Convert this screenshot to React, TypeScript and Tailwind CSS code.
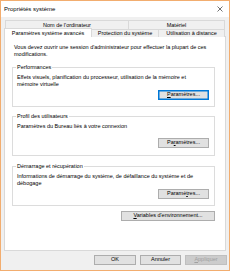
import React from 'react'

function Btn({ children, focused = false, disabled = false, className = '' }: { children: React.ReactNode; focused?: boolean; disabled?: boolean; className?: string }) {
  return (
    <button
      type="button"
      className={`flex h-[10px] items-center justify-center border text-[5.5px] leading-none ${
        focused ? 'border-[#0078d7] bg-[#e1e1e1] shadow-[inset_0_0_0_0.5px_#0078d7]' : disabled ? 'border-[#bfbfbf] bg-[#cccccc] text-[#a0a0a0]' : 'border-[#adadad] bg-[#e1e1e1]'
      } ${className}`}
    >
      {children}
    </button>
  )
}

function Group({ title, lines, button, className = '' }: { title: string; lines: string[]; button: React.ReactNode; className?: string }) {
  return (
    <fieldset className={`h-[43px] w-[203px] border border-[#dcdcdc] px-[4px] ${className}`}>
      <legend className="-ml-[1px] px-[1px] leading-[7px]">{title}</legend>
      <div className="mt-[3px] leading-[6.5px]">
        {lines.map((line) => (
          <div key={line}>{line}</div>
        ))}
      </div>
      {button}
    </fieldset>
  )
}

export default function App() {
  return (
    <div className="flex h-[271px] w-[230px] flex-col border border-[#f2ad6f] bg-[#f0f0f0] font-['Liberation_Sans',Arial,sans-serif] text-[5.5px] text-black">
      <div className="flex h-[16px] shrink-0 items-center justify-between bg-white pl-[3px] pr-[6px]">
        <span className="text-[6px]">Propriétés système</span>
        <svg width="6" height="6" viewBox="0 0 6 6" className="text-[#333]">
          <path d="M0.5 0.5L5.5 5.5M5.5 0.5L0.5 5.5" stroke="currentColor" strokeWidth="0.7" />
        </svg>
      </div>

      <div className="mt-[3px] flex h-[9px] w-[220px] self-start ml-[4px]">
        <div className="flex w-[124px] items-center justify-center border border-b-0 border-[#d9d9d9] bg-[#f0f0f0]">Nom de l'ordinateur</div>
        <div className="flex flex-1 items-center justify-center border border-b-0 border-l-0 border-[#d9d9d9] bg-[#f0f0f0]">Matériel</div>
      </div>
      <div className="relative z-10 flex h-[8px] w-[221px] ml-[3px]">
        <div className="-mt-[1px] flex h-[9px] w-[88px] items-center justify-center border border-b-0 border-[#d9d9d9] bg-white">Paramètres système avancés</div>
        <div className="flex w-[67px] items-center justify-center border border-b-0 border-l-0 border-[#d9d9d9] bg-[#f0f0f0]">Protection du système</div>
        <div className="flex flex-1 items-center justify-center border border-b-0 border-l-0 border-[#d9d9d9] bg-[#f0f0f0]">Utilisation à distance</div>
      </div>

      <div className="ml-[3px] flex h-[215px] w-[222px] flex-col border border-[#d9d9d9] bg-white px-[7px] -mt-[1px]">
        <div className="mt-[7px] pl-[2px] leading-[7px]">
          <div>Vous devez ouvrir une session d'administrateur pour effectuer la plupart de ces</div>
          <div>modifications.</div>
        </div>

        <Group
          className="mt-[6px]"
          title="Performances"
          lines={['Effets visuels, planification du processeur, utilisation de la mémoire et', 'mémoire virtuelle']}
          button={
            <div className="mt-[3px] flex justify-end pr-[1px]">
              <Btn focused className="w-[51px]"><span><u>P</u>aramètres...</span></Btn>
            </div>
          }
        />

        <Group
          className="mt-[6px]"
          title="Profil des utilisateurs"
          lines={['Paramètres du Bureau liés à votre connexion']}
          button={
            <div className="mt-[8px] flex justify-end pr-[1px]">
              <Btn className="w-[51px]"><span>Pa<u>r</u>amètres...</span></Btn>
            </div>
          }
        />

        <Group
          className="mt-[7px]"
          title="Démarrage et récupération"
          lines={['Informations de démarrage du système, de défaillance du système et de', 'débogage']}
          button={
            <div className="mt-[3px] flex justify-end pr-[1px]">
              <Btn className="w-[51px]"><span>Paramè<u>t</u>res...</span></Btn>
            </div>
          }
        />

        <div className="mt-[5px] flex w-[203px] justify-end">
          <Btn className="w-[94px]"><span><u>V</u>ariables d'environnement...</span></Btn>
        </div>
      </div>

      <div className="mt-[4px] flex justify-end gap-[4px] pr-[2px]">
        <Btn className="w-[42px]">OK</Btn>
        <Btn className="w-[41px]">Annuler</Btn>
        <Btn disabled className="w-[42px]"><span><u>A</u>ppliquer</span></Btn>
      </div>
    </div>
  )
}
